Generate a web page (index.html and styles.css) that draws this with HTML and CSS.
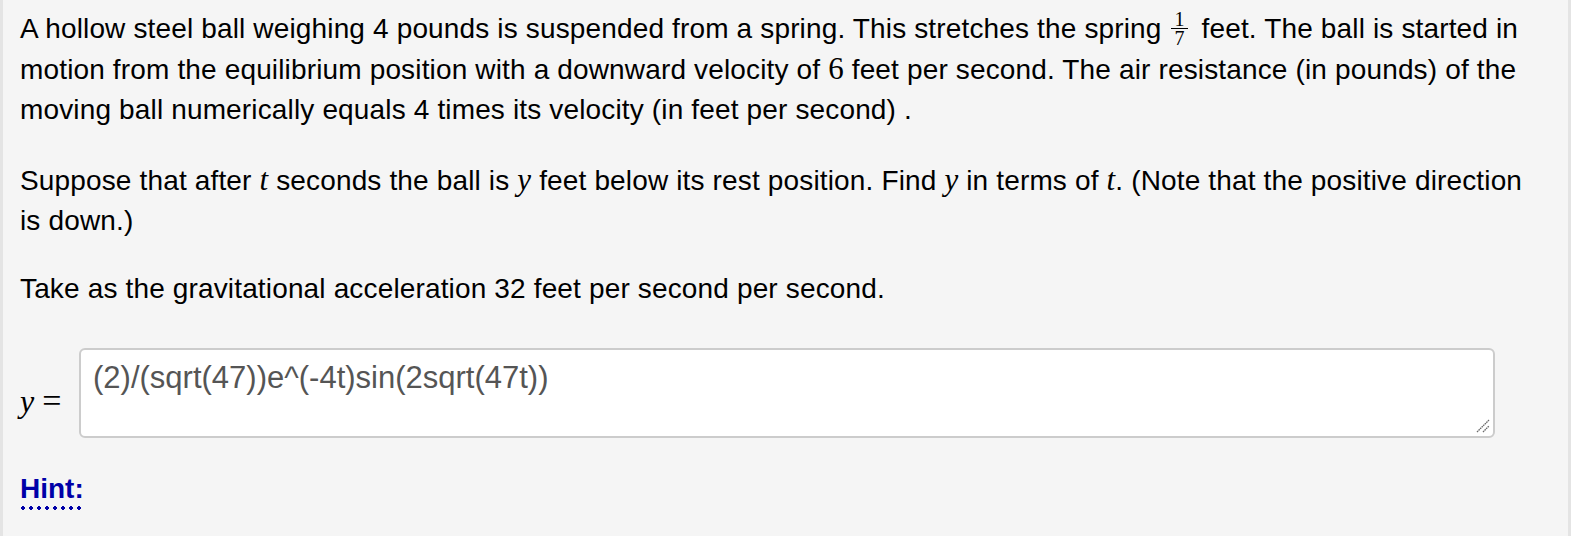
FILE: index.html
```html
<!DOCTYPE html>
<html>
<head>
<meta charset="utf-8">
<link rel="stylesheet" href="styles.css">
</head>
<body>
<div class="problem">
  <p class="para first">A hollow steel ball weighing 4 pounds is suspended from a spring. This stretches the spring <span class="frac"><span class="num">1</span><span class="den">7</span></span> feet. The ball is started in motion from the equilibrium position with a downward velocity of <span class="mn">6</span> feet per second. The air resistance (in pounds) of the moving ball numerically equals 4 times its velocity (in feet per second) .</p>
  <p class="para">Suppose that after <span class="mi">t</span> seconds the ball is <span class="mi">y</span> feet below its rest position. Find <span class="mi">y</span> in terms of <span class="mi">t</span>. (Note that the positive direction is down.)</p>
  <p class="para">Take as the gravitational acceleration 32 feet per second per second.</p>
  <div class="answer">
    <span class="label"><span class="mi">y</span><span class="eq">=</span></span>
    <div class="box">
      <span class="entry">(2)/(sqrt(47))e^(-4t)sin(2sqrt(47t))</span>
      <svg class="grip" width="14" height="14" viewBox="0 0 14 14"><path d="M1 13 L13 1 M7 13 L13 7" stroke="#6a6a6a" stroke-width="1.3" stroke-dasharray="1.6 0.6" fill="none"/></svg>
    </div>
  </div>
  <div class="hint"><span class="hintlink">Hint:</span></div>
</div>
</body>
</html>
```
FILE: styles.css
```css
html, body {
  margin: 0;
  padding: 0;
  background: #f5f5f5;
}
.problem {
  box-sizing: border-box;
  width: 1571px;
  height: 536px;
  background: #f5f5f5;
  border-left: 3px solid #e4e4e4;
  border-right: 3px solid #e4e4e4;
  padding: 9px 23px 0 17px;
  font-family: "Liberation Sans", Arial, sans-serif;
  font-size: 28px;
  letter-spacing: 0.15px;
  color: #000;
}
.para {
  margin: 0 0 28px 0;
  line-height: 40px;
}
.para.first {
  margin-bottom: 30px;
}
.mi {
  font-family: "Liberation Serif", "DejaVu Serif", serif;
  font-style: italic;
  font-size: 31px;
}
.mn {
  font-family: "Liberation Serif", "DejaVu Serif", serif;
  font-size: 31px;
}
.frac {
  display: inline-flex;
  flex-direction: column;
  align-items: center;
  vertical-align: middle;
  margin: -9px 6px -9px 2px;
  font-family: "Liberation Serif", "DejaVu Serif", serif;
  font-size: 20px;
  line-height: 16px;
  position: relative;
  top: -2px;
}
.frac .num {
  border-bottom: 1px solid #000;
  padding: 0 3px 1px;
}
.frac .den {
  padding-top: 1px;
}
.answer {
  display: flex;
  align-items: flex-start;
  margin-top: 39px;
}
.label {
  display: flex;
  align-items: center;
  width: 59px;
  flex-shrink: 0;
  padding-top: 34px;
}
.label .mi {
  font-size: 32px;
}
.eq {
  font-family: "Liberation Serif", "DejaVu Serif", serif;
  font-size: 34px;
  margin-left: 8px;
}
.box {
  position: relative;
  box-sizing: border-box;
  width: 1416px;
  flex-shrink: 0;
  height: 90px;
  background: #fff;
  border: 2px solid #cccccc;
  border-radius: 6px;
  padding: 10px 12px;
  color: #555;
  font-size: 31px;
  line-height: 36px;
  letter-spacing: 0;
}
.grip {
  position: absolute;
  right: 3px;
  bottom: 3px;
}
.hint {
  margin-top: 35px;
}
.hintlink {
  font-weight: bold;
  color: #0000a8;
  font-size: 28px;
  letter-spacing: 0;
  padding-bottom: 6px;
  background-image: radial-gradient(circle, #0000a8 1.6px, transparent 2px);
  background-size: 8px 4px;
  background-repeat: repeat-x;
  background-position: -1px 100%;
}
```
